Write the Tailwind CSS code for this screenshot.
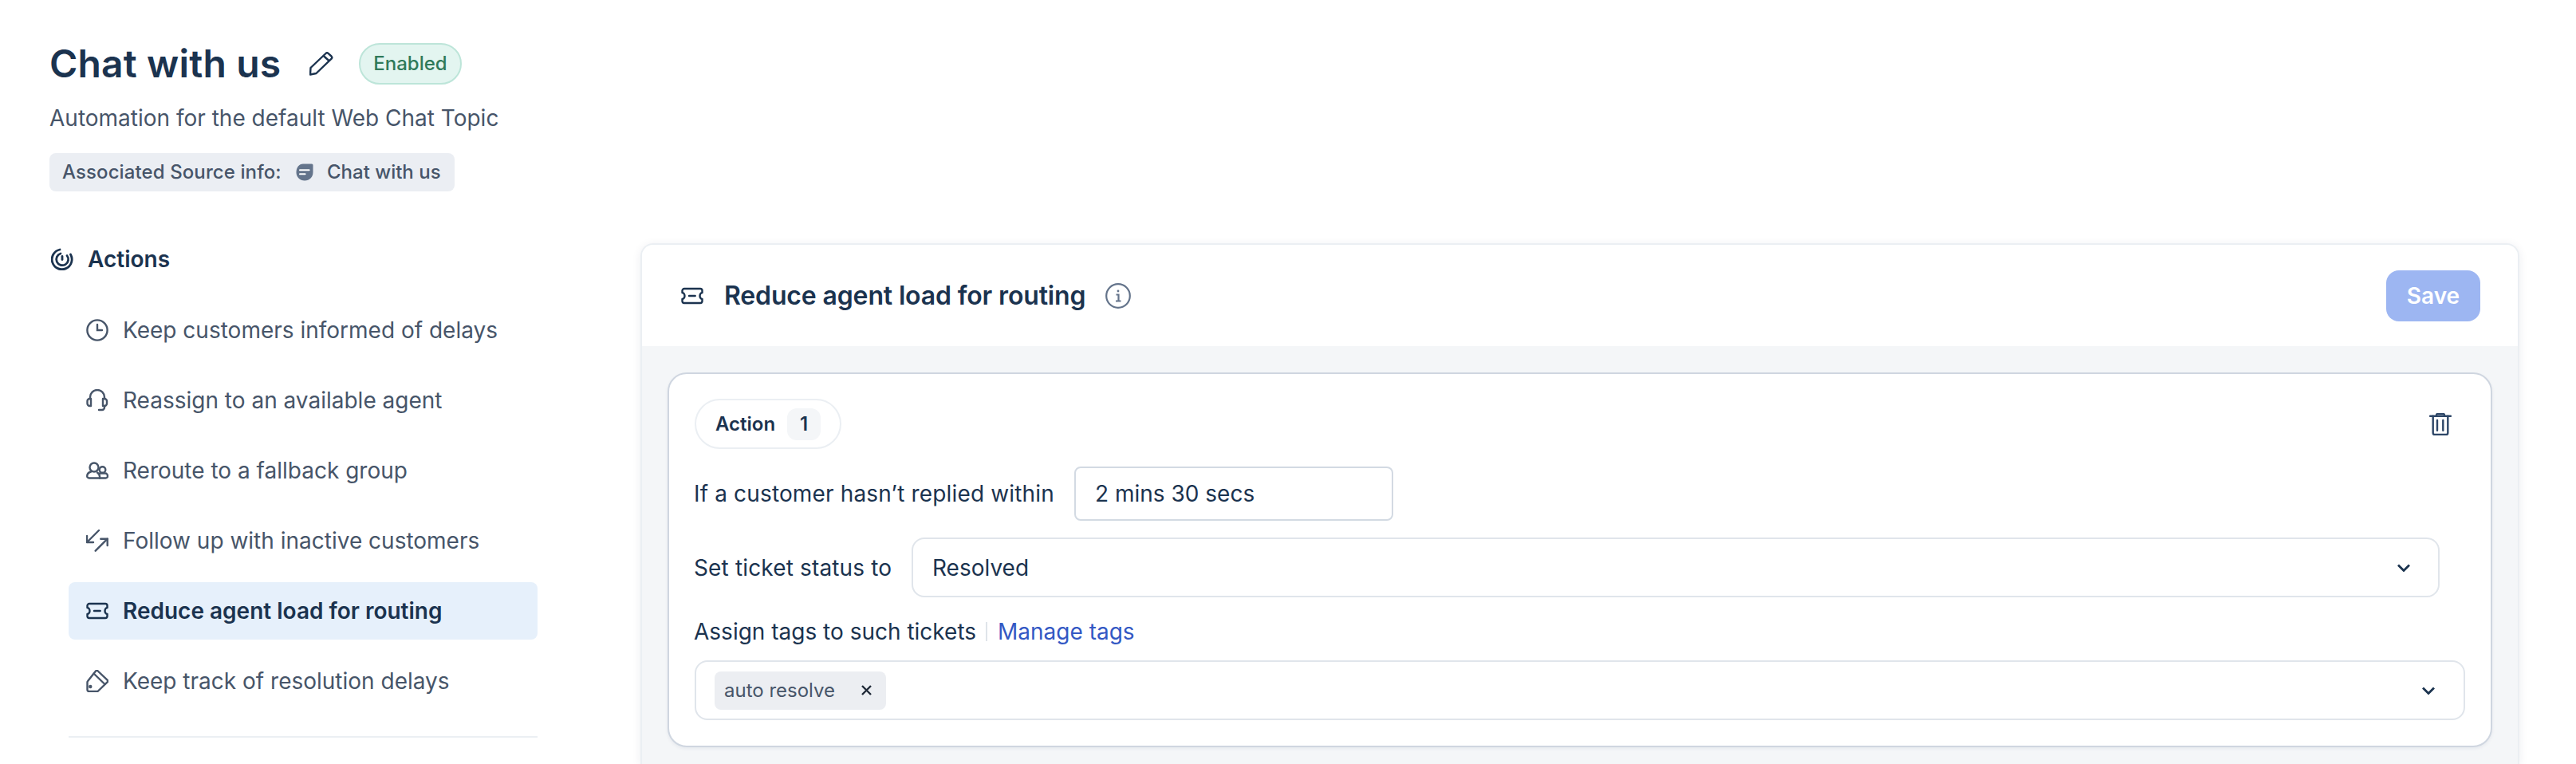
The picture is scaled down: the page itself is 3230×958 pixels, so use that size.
<!DOCTYPE html>
<html lang="en">
<head>
    <meta charset="UTF-8">
    <title>Chat with us</title>
    <script src="https://cdn.jsdelivr.net/npm/@tailwindcss/browser@4"></script>
</head>
<body class="bg-white h-screen overflow-hidden font-[family-name:Inter,sans-serif] [font-optical-sizing:none] text-[#1b334f]">
    <!-- Page header -->
    <header class="pl-[62px] pt-[54px]">
        <div class="flex items-center h-[52px]">
            <h1 class="w-[290px] whitespace-nowrap text-[48px] leading-[52px] font-semibold tracking-[0.15px]">Chat with us</h1>
            <svg class="ml-[36px] w-[30px] h-[30px]" viewBox="0 0 30 30" fill="none" stroke="#1b334f" stroke-width="2.4" stroke-linejoin="round"><path d="M1 28.500L1.500 20 20.500 2a2.200 2.200 0 0 1 3-.1l4 3.600a2.200 2.200 0 0 1 .1 3.100L8.500 27z"/><path d="M17.700 5l6.600 6"/></svg>
            <span class="ml-[32px] w-[129px] h-[52px] flex items-center justify-center rounded-full border-2 border-[#bde5d9] bg-[#e3f5f0] text-[24px] font-medium text-[#2f7a5a]">Enabled</span>
        </div>
        <p class="mt-[22px] text-[28px] leading-[40px] text-[#475569]">Automation for the default Web Chat Topic</p>
        <div class="mt-[24px] w-[508px] h-[48px] pl-[16px] flex items-center rounded-[8px] bg-[#ebeef3] text-[24px] font-medium text-[#475569]">
            <span class="w-[275px] whitespace-nowrap tracking-[0.1px]">Associated Source info:</span>
            <svg class="ml-[18px] w-[22px] h-[22px]" viewBox="0 0 22 22"><path d="M9 .5H20a1.500 1.500 0 0 1 1.500 1.500V11C21.500 17 17 21.500 11 21.500 5 21.500.5 17 .5 11 .5 5 4 .5 9 .5z" fill="#64748b"/><path d="M5 8.300H16.600M5 13.300H11.600" stroke="#fff" stroke-width="2" stroke-linecap="round"/></svg>
            <span class="ml-[17px] whitespace-nowrap">Chat with us</span>
        </div>
    </header>

    <main class="flex mt-[65px] h-[653px]">
        <!-- Sidebar -->
        <aside class="w-[612px] ml-[62px] shrink-0">
            <div class="flex items-center h-[40px] pl-[2px] text-[28px] font-semibold">
                <svg class="w-[28px] h-[28px]" viewBox="0 0 28 28" fill="none" stroke="#1b334f" stroke-width="2.8" stroke-linecap="round"><path d="M11 2A12.500 12.500 0 1 0 24.500 8"/><path d="M12 7A7.500 7.500 0 1 0 20 9.500"/><path d="M14 10.500V14.500"/></svg>
                <span class="ml-[18px]">Actions</span>
            </div>
            <nav class="mt-[33px] ml-[24px] flex flex-col gap-[16px] text-[28px] text-[#475569]">
                <a class="h-[72px] pl-[22px] flex items-center gap-[18px]">
                    <svg class="w-[28px] h-[28px]" viewBox="0 0 28 28" fill="none" stroke="#475569" stroke-width="2.4" stroke-linecap="round"><circle cx="14" cy="14" r="12.600"/><path d="M14 7v7h6"/></svg>
                    Keep customers informed of delays
                </a>
                <a class="h-[72px] pl-[22px] flex items-center gap-[18px]">
                    <svg class="w-[28px] h-[28px]" viewBox="0 0 28 28" fill="none" stroke="#475569" stroke-width="2.4" stroke-linecap="round" stroke-linejoin="round"><path d="M5 12V10a9 9 0 0 1 18 0v2"/><path d="M6 12H4.500a3 3 0 0 0-3 3v3a3 3 0 0 0 3 3H6z"/><path d="M21 12h2a3 3 0 0 1 3 3v3a3 3 0 0 1-3 3h-2z"/><path d="M23 21v2a3 3 0 0 1-3 3h-4"/></svg>
                    Reassign to an available agent
                </a>
                <a class="h-[72px] pl-[22px] flex items-center gap-[18px]">
                    <svg class="w-[28px] h-[28px]" viewBox="0 0 28 28" fill="none" stroke="#475569" stroke-width="2.4" stroke-linecap="round" stroke-linejoin="round"><circle cx="10" cy="10" r="5.500"/><circle cx="20.500" cy="13" r="3.800"/><path d="M6 15.500C3 16.500 1.200 18 1.200 21a2.500 2.500 0 0 0 2.500 2.500H24.500a2.500 2.500 0 0 0 2.500-2.500c0-2-1.500-3.500-3-3.500h-7"/><path d="M17 23.500v-2c0-2-1-3.500-3-5"/></svg>
                    Reroute to a fallback group
                </a>
                <a class="h-[72px] pl-[22px] flex items-center gap-[18px]">
                    <svg class="w-[28px] h-[28px]" viewBox="0 0 28 28" fill="none" stroke="#475569" stroke-width="2.4" stroke-linecap="round" stroke-linejoin="round"><path d="M16 1L1 16"/><path d="M1 8V16H9"/><path d="M11.700 26.700L26.700 11.700"/><path d="M18.300 11.700H26.700V20"/></svg>
                    Follow up with inactive customers
                </a>
                <a class="h-[72px] pl-[22px] flex items-center gap-[18px] rounded-[8px] bg-[#e6f0fb] font-semibold text-[#1b334f]">
                    <svg class="w-[28px] h-[28px]" viewBox="0 0 28 28" fill="none" stroke="#1b334f" stroke-width="2.400" stroke-linecap="round" stroke-linejoin="round"><path d="M1.500 7.500A2.500 2.500 0 0 1 4 5H24a2.500 2.500 0 0 1 2.500 2.500V10a3 4 0 0 0 0 8v2.500A2.500 2.500 0 0 1 24 23H4a2.500 2.500 0 0 1-2.500-2.500V18a3 4 0 0 0 0-8z"/><path d="M10 14h7.700"/></svg>
                    Reduce agent load for routing
                </a>
                <a class="h-[72px] pl-[22px] flex items-center gap-[18px]">
                    <svg class="w-[28px] h-[28px]" viewBox="0 0 28 28" fill="none" stroke="#475569" stroke-width="2.4" stroke-linecap="round" stroke-linejoin="round"><path d="M12 1.500a2 2 0 0 1 2.800 0L26.500 12.600a2 2 0 0 1 0 2.800L14.500 27H3.500a2 2 0 0 1-2-2V15.500a2 2 0 0 1 .6-1.400z"/><path d="M9.500 4.500L23.500 18"/><circle cx="5.300" cy="21" r="1" fill="#475569"/></svg>
                    Keep track of resolution delays
                </a>
            </nav>
            <div class="mt-[33px] ml-[24px] h-[2px] bg-[#ebeff3]"></div>
        </aside>

        <!-- Automation panel -->
        <section class="ml-[129px] w-[2356px] shrink-0 rounded-t-[16px] border-2 border-b-0 border-[#ebeff3] bg-[#f4f6f8] shadow-[0_2px_12px_rgba(15,40,80,0.08)]">
            <div class="h-[127px] flex items-center justify-between pl-[49px] pr-[47px] bg-white rounded-t-[14px]">
                <div class="flex items-center">
                    <svg class="w-[28px] h-[28px]" viewBox="0 0 28 28" fill="none" stroke="#1b334f" stroke-width="2.400" stroke-linecap="round" stroke-linejoin="round"><path d="M1.500 7.500A2.500 2.500 0 0 1 4 5H24a2.500 2.500 0 0 1 2.500 2.500V10a3 4 0 0 0 0 8v2.500A2.500 2.500 0 0 1 24 23H4a2.500 2.500 0 0 1-2.500-2.500V18a3 4 0 0 0 0-8z"/><path d="M10 14h7.700"/></svg>
                    <h2 class="ml-[26px] w-[454px] whitespace-nowrap text-[32px] font-semibold tracking-[-0.15px]">Reduce agent load for routing</h2>
                    <svg class="ml-[24px] w-[32px] h-[32px]" viewBox="0 0 32 32" fill="none" stroke="#64748b" stroke-width="2.200"><circle cx="16" cy="16" r="14.800"/><path d="M13.500 14.500H16.500V22.500M13 22.500H19.500"/><circle cx="16" cy="10" r="1.400" fill="#64748b" stroke="none"/></svg>
                </div>
                <button class="w-[118px] h-[64px] rounded-[16px] bg-[#9db6f2] text-[28px] font-semibold text-white">Save</button>
            </div>
            <div class="mt-[33px] ml-[32px] w-[2288px] h-[470px] rounded-[24px] border-2 border-[#cfd6e0] bg-white pt-[31px] px-[32px] shadow-[0_2px_4px_rgba(15,40,80,0.06)]">
                <div class="flex items-start justify-between pr-[17px]">
                    <div class="h-[63px] w-[184px] flex items-center rounded-full border-2 border-[#ebeff3] pl-[24px] text-[24px] font-semibold">
                        <span class="w-[74px]">Action</span>
                        <span class="ml-[16px] w-[42px] h-[40px] flex items-center justify-center rounded-[12px] bg-[#f4f6f8]">1</span>
                    </div>
                    <svg class="mt-[18px] w-[28px] h-[28px]" viewBox="0 0 28 28" fill="none" stroke="#2d4667" stroke-width="2.400" stroke-linecap="round" stroke-linejoin="round"><path d="M1 3.700H27"/><path d="M9 3.700V2.500A1.500 1.500 0 0 1 10.500 1H17.500A1.500 1.500 0 0 1 19 2.500V3.700"/><path d="M4.700 3.700V25A2 2 0 0 0 6.700 27H21.300A2 2 0 0 0 23.300 25V3.700"/><path d="M10 9V21.700M17.300 9V21.700"/></svg>
                </div>
                <div class="mt-[22px] flex items-center text-[28px]">
                    <span class="w-[476px] whitespace-nowrap tracking-[0.15px] -ml-[1px] mr-[1px]">If a customer hasn’t replied within</span>
                    <div class="w-[400px] h-[68px] flex items-center rounded-[8px] border-2 border-[#d3dae3] pl-[24px]">2 mins 30 secs</div>
                </div>
                <div class="mt-[21px] flex items-center text-[28px]">
                    <span class="w-[272px] whitespace-nowrap tracking-[0.15px] -ml-[1px] mr-[1px]">Set ticket status to</span>
                    <div class="w-[1916px] h-[75px] flex items-center justify-between rounded-[16px] border-2 border-[#e0e5eb] pl-[24px] pr-[35px]">
                        Resolved
                        <svg class="w-[16px] h-[10px]" viewBox="0 0 16 10" fill="none" stroke="#1b334f" stroke-width="2.800"><path d="M1 1.500l7 7 7-7"/></svg>
                    </div>
                </div>
                <div class="mt-[23px] flex items-center text-[28px] h-[40px]">
                    <span class="w-[352px] whitespace-nowrap -ml-[1px] mr-[1px]">Assign tags to such tickets</span>
                    <span class="ml-[13px] w-[2px] h-[24px] bg-[#dfe4ea]"></span>
                    <a class="ml-[13px] text-[#3358c4]">Manage tags</a>
                </div>
                <div class="mt-[16px] h-[75px] flex items-center justify-between rounded-[16px] border-2 border-[#e0e5eb] pl-[23px] pr-[36px]">
                    <span class="h-[48px] w-[215px] flex items-center justify-between rounded-[8px] bg-[#eceef2] pl-[12px] pr-[17px] text-[24px] text-[#475569]">
                        auto resolve
                        <svg class="w-[15px] h-[15px]" viewBox="0 0 15 15" fill="none" stroke="#1f2937" stroke-width="2.400"><path d="M2 2l11 11M13 2L2 13"/></svg>
                    </span>
                    <svg class="w-[16px] h-[10px]" viewBox="0 0 16 10" fill="none" stroke="#1b334f" stroke-width="2.800"><path d="M1 1.500l7 7 7-7"/></svg>
                </div>
            </div>
        </section>
    </main>
</body>
</html>
